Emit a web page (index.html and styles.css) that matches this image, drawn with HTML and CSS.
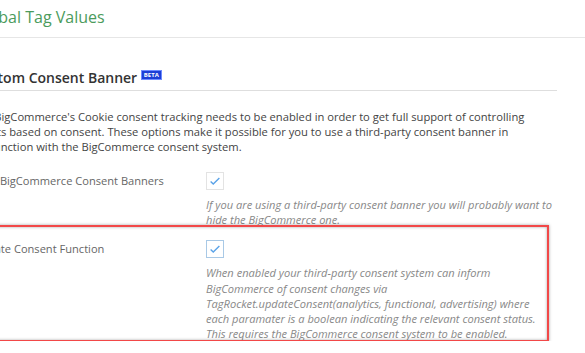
FILE: index.html
```html
<!DOCTYPE html>
<html lang="en">
<head>
  <meta charset="UTF-8" />
  <title>Global Tag Values</title>
  <link rel="stylesheet" href="styles.css">
</head>
<body>
  <div class="page">
    <h1 class="page-title">Global Tag Values</h1>

    <section class="panel">
      <h2 class="section-title">Custom Consent Banner <span class="badge">BETA</span></h2>

      <p class="intro">The BigCommerce's Cookie consent tracking needs to be enabled in order to get full support of controlling events based on consent. These options make it possible for you to use a third-party consent banner in conjunction with the BigCommerce consent system.</p>

      <div class="row">
        <label class="row-label" for="hideBanners">Hide BigCommerce Consent Banners</label>
        <div class="row-field">
          <span class="check" id="hideBanners">
            <svg viewBox="0 0 16 16" width="14" height="14"><path d="M3 8.5l3 3 7-7" /></svg>
          </span>
          <p class="help">If you are using a third-party consent banner you will probably want to hide the BigCommerce one.</p>
        </div>
      </div>

      <div class="row highlighted">
        <label class="row-label" for="updateConsent">Update Consent Function</label>
        <div class="row-field">
          <span class="check focus" id="updateConsent">
            <svg viewBox="0 0 16 16" width="14" height="14"><path d="M3 8.5l3 3 7-7" /></svg>
          </span>
          <p class="help">When enabled your third-party consent system can inform BigCommerce of consent changes via TagRocket.updateConsent(analytics, functional, advertising) where each paramater is a boolean indicating the relevant consent status. This requires the BigCommerce consent system to be enabled.</p>
        </div>
        <span class="marker"></span>
      </div>
    </section>
  </div>
</body>
</html>
```

FILE: styles.css
```css
* {
  box-sizing: border-box;
}

body {
  margin: 0;
  font-family: 'Open Sans', sans-serif;
  background: white;
  overflow: hidden;
}

.page {
  margin-left: -28px;
  width: 613px;
}

.page-title {
  margin: 0;
  padding: 6px 0 0 1px;
  height: 38px;
  font-size: 16px;
  font-weight: normal;
  color: #4b9b5c;
  border-bottom: 1px solid #e6e6e6;
}

.panel {
  width: 585px;
  padding-top: 30px;
}

.section-title {
  margin: 0 0 0 1px;
  padding-bottom: 2px;
  font-size: 14px;
  font-weight: 600;
  color: #333;
  border-bottom: 1px solid #dedede;
  line-height: 20px;
}

.badge {
  display: inline-block;
  vertical-align: 6px;
  padding: 0 2px;
  font-size: 6px;
  line-height: 8px;
  font-weight: bold;
  color: white;
  background: #1c3fd6;
  border: 1px solid #6d8bff;
}

.intro {
  margin: 18px 0 0 0;
  padding: 0 14px 0 0;
  font-size: 11.2px;
  line-height: 15px;
  color: #444;
}

.row {
  display: flex;
  position: relative;
  margin-top: 18px;
}

.row + .row {
  margin-top: 13px;
}

.row-label {
  width: 234px;
  flex-shrink: 0;
  padding: 1px 0 0 1px;
  font-size: 11.1px;
  line-height: 16px;
  color: #666;
}

.row-field {
  width: 348px;
}

.check {
  display: flex;
  align-items: center;
  justify-content: center;
  width: 18px;
  height: 18px;
  border: 1px solid #e3e3e3;
  background: white;
}

.check.focus {
  border-color: #a9c9e6;
}

.check path {
  fill: none;
  stroke: #5ba3e8;
  stroke-width: 1.6;
}

.help {
  margin: 7px 0 0 0;
  font-size: 11.1px;
  line-height: 15.2px;
  font-style: italic;
  color: #888;
}

.marker {
  position: absolute;
  top: -15px;
  left: -10px;
  width: 587px;
  bottom: -1px;
  border: 2px solid #f24848;
  box-shadow: 0 0 3px rgba(0, 0, 0, 0.35), inset 0 0 3px rgba(0, 0, 0, 0.35);
  pointer-events: none;
}
```
